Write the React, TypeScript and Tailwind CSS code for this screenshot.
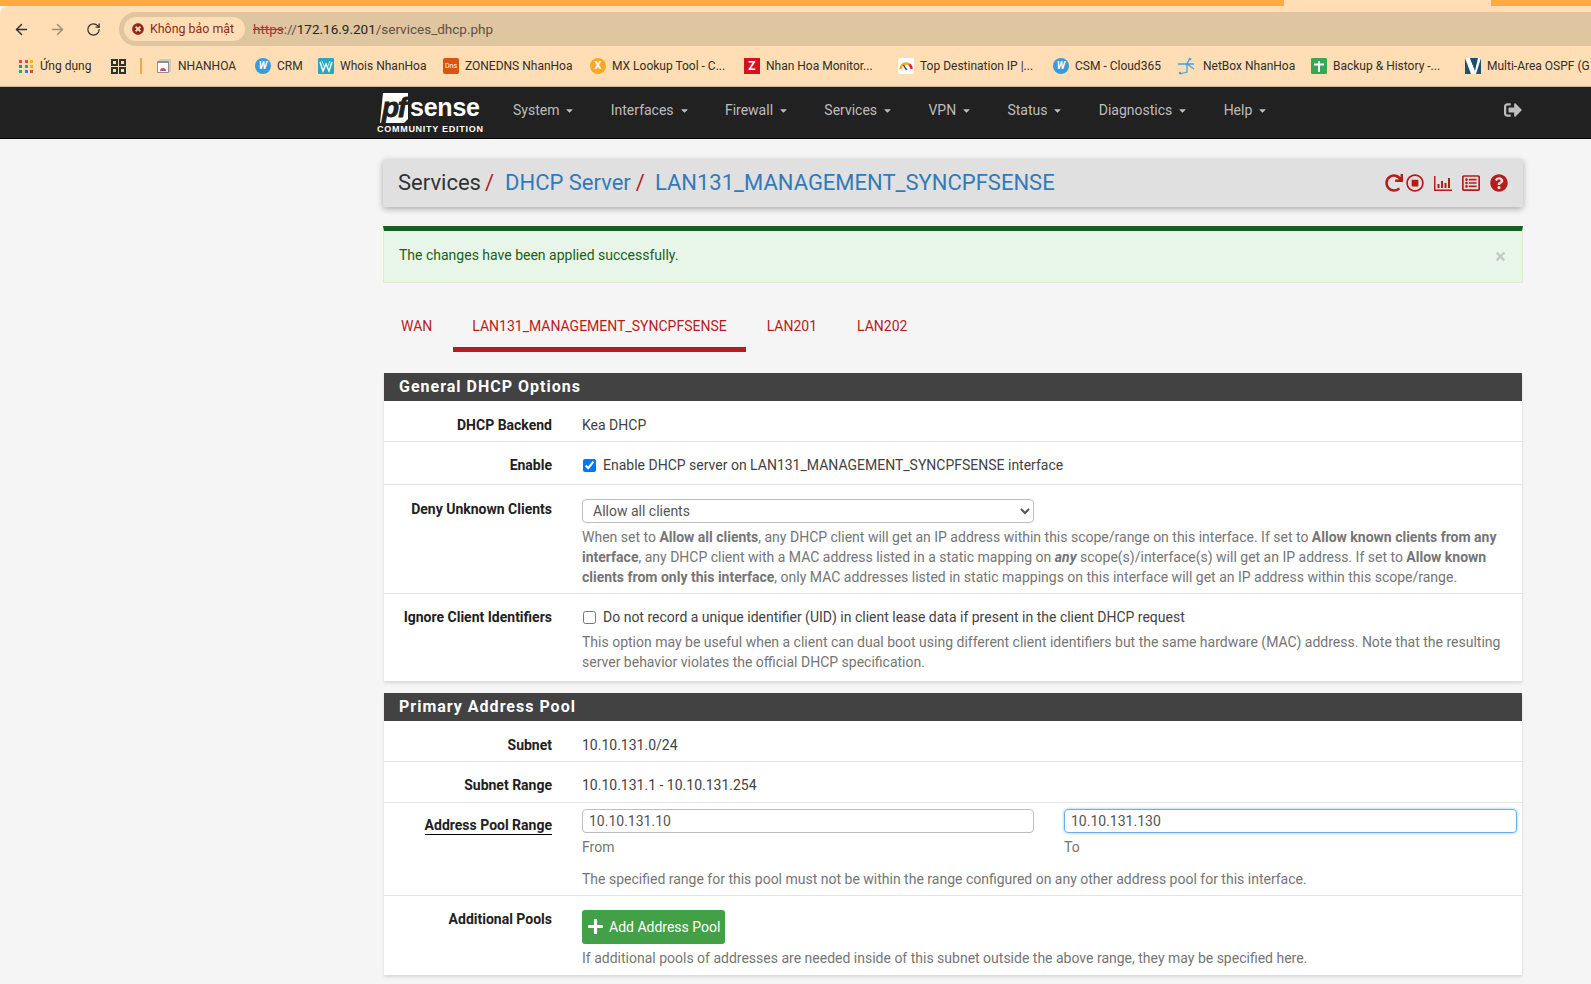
import React from 'react';
import { ArrowLeft, ArrowRight, RotateCw } from 'lucide-react';
import {
  FaRedo,
  FaRegStopCircle,
  FaRegListAlt,
  FaQuestionCircle,
  FaSignOutAlt,
  FaPlus,
  FaTimes,
  FaCaretDown,
  FaTimesCircle,
} from 'react-icons/fa';

const W = ({ color = '#3b9ad9' }: { color?: string }) => (
  <span
    className="flex h-4 w-4 items-center justify-center rounded-full text-[10px] font-bold italic text-white"
    style={{ background: color }}
  >
    W
  </span>
);

const bookmarks = [
  {
    label: 'NHANHOA',
    w: 'w-[60px]',
    icon: (
      <svg width="16" height="16" viewBox="0 0 16 16">
        <rect x="3" y="1" width="12" height="13" rx="1" fill="#c9c9c9" />
        <rect x="1" y="3" width="12" height="12" rx="1" fill="#8e8e8e" />
        <rect x="2" y="5" width="10" height="9" fill="#fff" />
        <path d="M4 13a3 3 0 0 1 6 0z" fill="#e8453c" />
        <path d="M5.5 13a1.5 1.5 0 0 1 3 0z" fill="#3b78e7" />
      </svg>
    ),
  },
  { label: 'CRM', w: 'w-[24px]', icon: <W /> },
  {
    label: 'Whois NhanHoa',
    w: 'w-[86px]',
    icon: (
      <svg width="16" height="16" viewBox="0 0 16 16">
        <rect width="16" height="16" rx="1" fill="#2aa7bd" />
        <path d="M2 4l3 9 3-7 3 7 3-9" fill="none" stroke="#fff" strokeWidth="1.4" />
        <path d="M4 3l2 5M12 3l-2 5" stroke="#bfeef5" strokeWidth="1" />
      </svg>
    ),
  },
  {
    label: 'ZONEDNS NhanHoa',
    w: 'w-[108px]',
    icon: (
      <span className="flex h-4 w-4 items-center justify-center rounded-[2px] bg-[#d9540f] text-[7px] text-white">
        Dns
      </span>
    ),
  },
  {
    label: 'MX Lookup Tool - C...',
    w: 'w-[115px]',
    icon: (
      <span className="flex h-4 w-4 items-center justify-center rounded-full bg-[#f9a825] text-[11px] font-bold text-white">
        X
      </span>
    ),
  },
  {
    label: 'Nhan Hoa Monitor...',
    w: 'w-[115px]',
    icon: (
      <span className="flex h-4 w-4 items-center justify-center bg-[#d2121f] text-[12px] font-bold text-white">
        Z
      </span>
    ),
  },
  {
    label: 'Top Destination IP |...',
    w: 'w-[116px]',
    icon: (
      <svg width="16" height="16" viewBox="0 0 16 16">
        <rect width="16" height="16" rx="2" fill="#fff" />
        <path d="M2.5 11a5.5 5.5 0 0 1 11 0" fill="none" stroke="#f5a623" strokeWidth="2.4" />
        <path d="M11.5 6.5A5.5 5.5 0 0 1 13.5 11" fill="none" stroke="#e5195f" strokeWidth="2.4" />
        <path d="M5.5 7l3 5" stroke="#333" strokeWidth="1.4" />
      </svg>
    ),
  },
  { label: 'CSM - Cloud365', w: 'w-[84px]', icon: <W /> },
  {
    label: 'NetBox NhanHoa',
    w: 'w-[91px]',
    icon: (
      <svg width="21" height="18" viewBox="0 0 21 18">
        <path d="M2 7h16M14 1l-3 6v8l-7 2M11 7l7 5" fill="none" stroke="#4aa3df" strokeWidth="1.3" />
        <circle cx="14" cy="2" r="1.3" fill="#4aa3df" />
        <circle cx="11" cy="7" r="1.3" fill="#4aa3df" />
        <circle cx="4" cy="16" r="1.3" fill="#4aa3df" />
      </svg>
    ),
  },
  {
    label: 'Backup & History -...',
    w: 'w-[115px]',
    icon: (
      <svg width="16" height="16" viewBox="0 0 16 16">
        <rect width="16" height="16" rx="1" fill="#34a853" />
        <path d="M8 3v11M3 6.5h10" stroke="#fff" strokeWidth="2" />
      </svg>
    ),
  },
  {
    label: 'Multi-Area OSPF (G',
    w: 'w-[104px]',
    icon: (
      <svg width="16" height="16" viewBox="0 0 16 16">
        <rect width="16" height="16" fill="#1d4f6e" />
        <path d="M0 0h5l4 10 3-10h4L11 16H6z" fill="#fff" />
        <path d="M5 0l5 13L13 0h-2l-2 6L7 0z" fill="#1d4f6e" />
      </svg>
    ),
  },
];

const menu = ['System', 'Interfaces', 'Firewall', 'Services', 'VPN', 'Status', 'Diagnostics', 'Help'];

function BrowserChrome() {
  return (
    <div className="font-['Roboto',sans-serif]">
      <div className="flex h-[6px] bg-[#ffab40]">
        <div className="h-full w-[1284px]" />
        <div className="h-full w-[207px] bg-[#ffdeb5]" />
      </div>
      <div className="flex h-[40px] items-center rounded-tl-[8px] bg-[#ffdeb5] pl-[13px] pt-[6px]">
        <ArrowLeft size={17} strokeWidth={2} className="text-[#33302b]" />
        <ArrowRight size={17} strokeWidth={2} className="ml-[19px] text-[#a18d72]" />
        <RotateCw size={15} strokeWidth={2} className="ml-[20px] text-[#33302b]" />
        <div className="ml-[18px] flex h-[34px] flex-1 items-center rounded-l-full bg-[#dfc5a0] pl-[5px]">
          <div className="flex h-[24px] w-[121px] items-center gap-[6px] rounded-full bg-[#ffdeb5] pl-[8px] text-[12.4px] text-[#8c2a22]">
            <FaTimesCircle size={12} className="text-[#8c2a22]" />
            Không bảo mật
          </div>
          <div className="ml-[8px] text-[13.5px] text-[#5f5140]">
            <span className="text-[#a03a30] line-through">https</span>
            <span>://</span>
            <span className="text-[#2b2620]">172.16.9.201</span>
            <span>/services_dhcp.php</span>
          </div>
        </div>
      </div>
      <div className="flex h-[41px] items-center overflow-hidden whitespace-nowrap border-b border-[#cdb595] bg-[#ffdeb5] pl-[19px] text-[12px] text-[#332d24]">
        <div className="grid w-[15px] grid-cols-3 gap-[2px]">
          {['#e8453c', '#e8453c', '#f4b400', '#3b78e7', '#34a853', '#f4b400', '#34a853', '#3b78e7', '#e8453c'].map((c, i) => (
            <span key={i} className="h-[3px] w-[3px]" style={{ background: c }} />
          ))}
        </div>
        <span className="ml-[6px] w-[53px]">Ứng dụng</span>
        <svg className="ml-[18px]" width="15" height="15" viewBox="0 0 15 15" fill="none" stroke="#33302b" strokeWidth="2">
          <rect x="1" y="1" width="5" height="5" />
          <rect x="9" y="1" width="5" height="5" />
          <rect x="1" y="9" width="5" height="5" />
          <rect x="9" y="9" width="5" height="5" />
        </svg>
        <span className="ml-[14px] h-[16px] w-[2px] bg-[#f2a446]" />
        <div className="ml-[14px] flex items-center gap-[17px]">
          {bookmarks.map((b) => (
            <div key={b.label} className="flex items-center gap-[6px]">
              {b.icon}
              <span className={`${b.w} shrink-0`}>{b.label}</span>
            </div>
          ))}
        </div>
      </div>
    </div>
  );
}

function Logo() {
  return (
    <svg width="110" height="48" viewBox="0 0 110 48" className="ml-[-3px]">
      <path d="M7 4h25v26l-4 4H4z" fill="#fff" />
      <text
        x="6"
        y="28"
        fontFamily="Liberation Sans, sans-serif"
        fontStyle="italic"
        fontWeight="700"
        fontSize="28"
        fill="#212121"
        stroke="#212121"
        strokeWidth="0.8"
        textLength="25"
      >
        pf
      </text>
      <text x="34" y="27" fontFamily="Liberation Sans, sans-serif" fontWeight="700" fontSize="25" fill="#fff" textLength="70">
        sense
      </text>
      <text x="1" y="42.5" fontFamily="Liberation Sans, sans-serif" fontWeight="700" fontSize="9" fill="#fff" textLength="106">
        COMMUNITY EDITION
      </text>
    </svg>
  );
}

function Navbar() {
  return (
    <nav className="flex h-[52px] items-center border-b border-black bg-[#212121] pl-[379px] pr-[68px]">
      <Logo />
      <div className="ml-[27px] flex flex-1 items-center gap-[35.3px] pb-[5px] text-[14px] text-[#bdbdbd]">
        {menu.map((m) => (
          <div key={m} className="flex items-center gap-[5px]">
            {m}
            <FaCaretDown size={11} />
          </div>
        ))}
      </div>
      <FaSignOutAlt size={18} className="mb-[5px] mr-[1px] text-[#bdbdbd]" />
    </nav>
  );
}

function Row({
  label,
  underline,
  className,
  children,
}: {
  label: string;
  underline?: boolean;
  className?: string;
  children: React.ReactNode;
}) {
  return (
    <div className={`flex border-b border-[#e4e4e4] last:border-b-0 ${className ?? ''}`}>
      <div className="w-[168px] shrink-0 text-right font-bold text-[#212121]">
        <span className={underline ? 'border-b border-black pb-[1px]' : ''}>{label}</span>
      </div>
      <div className="ml-[30px] mr-[5px] flex-1 text-[#424242]">{children}</div>
    </div>
  );
}

function Section({ title, children }: { title: string; children: React.ReactNode }) {
  return (
    <section className="shadow-[0_2px_3px_rgba(0,0,0,0.12)]">
      <h2 className="flex h-[28px] items-center bg-[#424242] pl-[15px] text-[16px] font-bold tracking-[1px] text-white">
        {title}
      </h2>
      <div className="bg-white">{children}</div>
    </section>
  );
}

export default function App() {
  return (
    <div className="h-[984px] overflow-hidden bg-[#f5f5f5] font-['Roboto',sans-serif] text-[14px] leading-[20px] text-[#212121]">
      <BrowserChrome />
      <Navbar />
      <main className="ml-[383px] mr-[68px] pt-[20px]">
        <header className="flex h-[48px] items-center rounded-[2px] bg-[#e0e0e0] pl-[15px] pr-[15px] text-[22px] shadow-[0_2px_6px_rgba(0,0,0,0.3)]">
          <span className="text-[#333]">Services</span>
          <span className="ml-[4px] text-[#b71c1c]">/</span>
          <span className="ml-[11px] text-[#337ab7]">DHCP Server</span>
          <span className="ml-[5px] text-[#b71c1c]">/</span>
          <span className="ml-[10px] text-[#337ab7]">LAN131_MANAGEMENT_SYNCPFSENSE</span>
          <div className="ml-auto flex items-center text-[#b71c1c]">
            <FaRedo size={18} className="mr-[1px]" />
            <FaRegStopCircle size={18} className="ml-[2px]" />
            <svg className="ml-[10px]" width="18" height="16" viewBox="0 0 18 16" fill="#b71c1c">
              <path d="M0 1h1.5v13.5H18V16H0z" />
              <rect x="3.5" y="9" width="2" height="4" />
              <rect x="7" y="6" width="2" height="7" />
              <rect x="10.5" y="8" width="2" height="5" />
              <rect x="14" y="3" width="2" height="10" />
            </svg>
            <FaRegListAlt size={18} className="ml-[10px]" />
            <FaQuestionCircle size={18} className="ml-[10px]" />
          </div>
        </header>

        <div className="mt-[19px] flex h-[57px] items-center justify-between border-x border-b border-t-[5px] border-[#dcedc8] border-t-[#1b5e20] bg-[#e8f5e9] pb-[4px] pl-[15px] pr-[15px] text-[#1b5e20]">
          The changes have been applied successfully.
          <FaTimes size={13} className="mt-[4px] text-[#c4cbc5]" />
        </div>

        <div className="mt-[21px] flex h-[48px] items-stretch text-[#b71c1c]">
          <div className="flex items-center px-[18px] pb-[5px]">WAN</div>
          <div className="ml-[3px] flex items-center border-b-[5px] border-[#b71c1c] px-[19px]">
            LAN131_MANAGEMENT_SYNCPFSENSE
          </div>
          <div className="flex items-center px-[21px] pb-[5px]">LAN201</div>
          <div className="flex items-center px-[19px] pb-[5px]">LAN202</div>
        </div>

        <div className="ml-[1px] mr-[1px] mt-[21px]">
          <Section title="General DHCP Options">
            <Row label="DHCP Backend" className="h-[41px] items-center pt-[8px]">
              Kea DHCP
            </Row>
            <Row label="Enable" className="h-[43px] items-center pt-[4px]">
              <label className="flex items-center gap-[7px]">
                <input type="checkbox" defaultChecked className="ml-[1px] h-[13px] w-[13px] accent-[#0075ff]" />
                Enable DHCP server on LAN131_MANAGEMENT_SYNCPFSENSE interface
              </label>
            </Row>
            <Row label="Deny Unknown Clients" className="h-[109px] pt-[14px]">
              <select
                defaultValue="all"
                className="block h-[24px] w-[452px] rounded-[4px] border border-[#bdbdbd] bg-white pl-[6px] text-[14px] text-[#555]"
              >
                <option value="all">Allow all clients</option>
              </select>
              <p className="mt-[4px] text-[#757575]">
                When set to <b>Allow all clients</b>, any DHCP client will get an IP address within this scope/range on this interface. If set to <b>Allow known clients from any interface</b>, any DHCP client with a MAC address listed in a static mapping on <b><i>any</i></b> scope(s)/interface(s) will get an IP address. If set to <b>Allow known clients from only this interface</b>, only MAC addresses listed in static mappings on this interface will get an IP address within this scope/range.
              </p>
            </Row>
            <Row label="Ignore Client Identifiers" className="h-[87px] pt-[13px]">
              <label className="flex items-center gap-[7px]">
                <input type="checkbox" className="ml-[1px] h-[13px] w-[13px]" />
                Do not record a unique identifier (UID) in client lease data if present in the client DHCP request
              </label>
              <p className="mt-[5px] text-[#757575]">
                This option may be useful when a client can dual boot using different client identifiers but the same hardware (MAC) address. Note that the resulting server behavior violates the official DHCP specification.
              </p>
            </Row>
          </Section>

          <div className="mt-[12px]">
            <Section title="Primary Address Pool">
              <Row label="Subnet" className="h-[41px] items-center pt-[8px]">
                10.10.131.0/24
              </Row>
              <Row label="Subnet Range" className="h-[41px] items-center pt-[6px]">
                10.10.131.1 - 10.10.131.254
              </Row>
              <Row label="Address Pool Range" underline className="h-[93px] pt-[12px]">
                <div className="mt-[-6px] flex gap-[30px]">
                  <div className="w-[452px]">
                    <input
                      defaultValue="10.10.131.10"
                      className="block h-[24px] w-full rounded-[4px] border border-[#bdbdbd] pb-[1px] pl-[6px] text-[#555]"
                    />
                    <div className="mt-[4px] text-[#757575]">From</div>
                  </div>
                  <div className="flex-1">
                    <input
                      defaultValue="10.10.131.130"
                      className="block h-[24px] w-full rounded-[4px] border border-[#66afe9] pb-[1px] pl-[6px] text-[#555] shadow-[0_0_3px_rgba(102,175,233,0.8)]"
                    />
                    <div className="mt-[4px] text-[#757575]">To</div>
                  </div>
                </div>
                <p className="mt-[12px] text-[#757575]">
                  The specified range for this pool must not be within the range configured on any other address pool for this interface.
                </p>
              </Row>
              <Row label="Additional Pools" className="h-[79px] pt-[13px]">
                <button className="mt-[1px] flex h-[34px] items-center gap-[5px] rounded-[3px] bg-[#43a047] pb-[1px] pl-[5px] pr-[5px] text-white">
                  <FaPlus size={17} />
                  Add Address Pool
                </button>
                <p className="mt-[4px] text-[#757575]">
                  If additional pools of addresses are needed inside of this subnet outside the above range, they may be specified here.
                </p>
              </Row>
            </Section>
          </div>
        </div>
      </main>
    </div>
  );
}
